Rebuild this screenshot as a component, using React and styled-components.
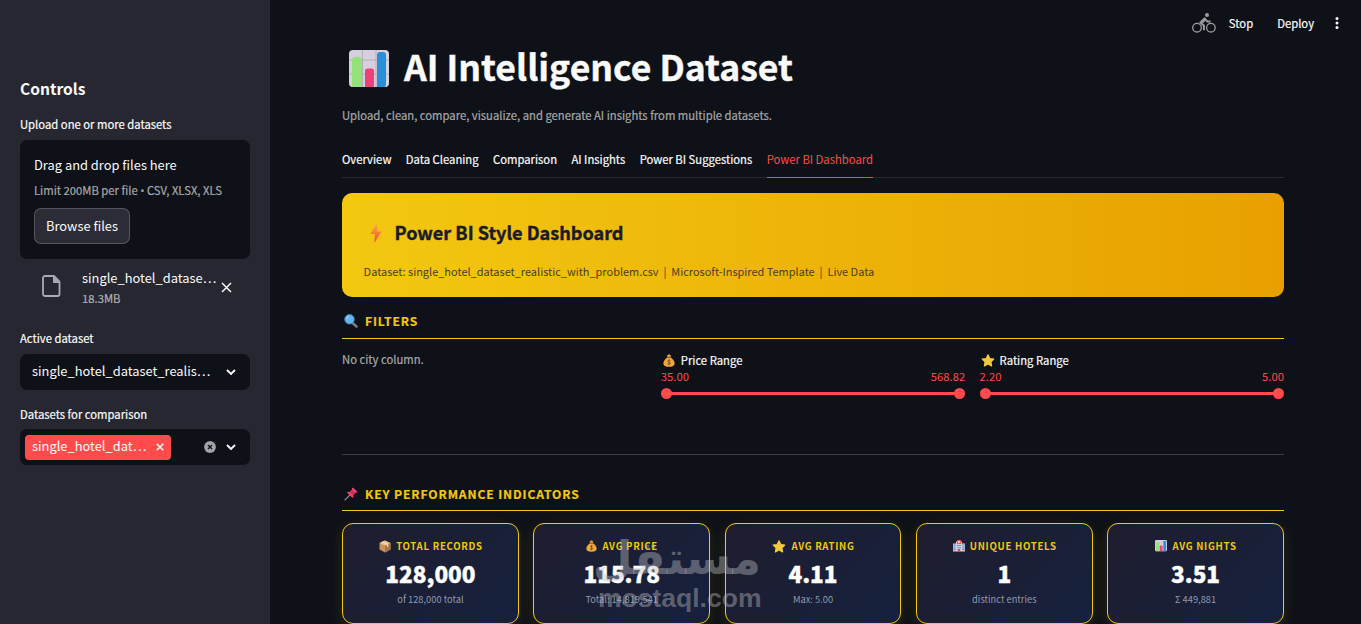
import React from 'react'
import styled, { createGlobalStyle, css } from 'styled-components'

// the CJK family carries wider latin glyphs, so sizes get scaled down
const fs = (px) => `${(px * 0.895).toFixed(2)}px`

const GlobalStyle = createGlobalStyle`
    * { box-sizing: border-box; }
    body {
        margin: 0;
        background: #0e1117;
        color: #fafafa;
        font-family: "Noto Sans CJK SC", "Open Sans", sans-serif;
        font-size: ${fs(12.6)};
        line-height: 20px;
        white-space: nowrap;
        overflow: hidden;
    }
`

const sturdy = css`
    -webkit-text-stroke: 0.2px currentColor;
`

const heavy = css`
    -webkit-text-stroke: 0.4px currentColor;
`

const Page = styled.div`
    display: flex;
    width: 1361px;
    height: 624px;
    overflow: hidden;
    position: relative;
`

const Sidebar = styled.aside`
    width: 270px;
    flex: none;
    padding: 76px 20px 0;
    background: #262730;
`

const SideTitle = styled.h2`
    margin: 0;
    font-size: ${fs(17.4)};
    font-weight: 600;
    line-height: 24px;
`

const Label = styled.div`
    height: 20px;
    margin-top: ${(p) => p.$top}px;
    line-height: 18px;
    ${sturdy}
`

const Dropzone = styled.div`
    height: 119px;
    margin-top: 5px;
    padding: 15px 14px;
    border-radius: 7px;
    background: #0e1117;
    font-size: ${fs(14.4)};
`

const Muted = styled.div`
    height: 18px;
    color: rgba(250, 250, 250, 0.6);
    font-size: ${fs(12.6)};
    line-height: 18px;
    ${sturdy}
`

const Limit = styled(Muted)`
    margin-top: 6px;
`

const Bullet = styled.span`
    font-family: "Open Sans", sans-serif;
`

const BrowseButton = styled.button`
    display: block;
    width: 96px;
    height: 36px;
    margin-top: 9px;
    padding: 0;
    border: 1px solid rgba(250, 250, 250, 0.2);
    border-radius: 7px;
    background: #2b2c36;
    color: #fafafa;
    font: inherit;
    font-size: ${fs(14.4)};
`

const FileRow = styled.div`
    display: flex;
    align-items: center;
    height: 40px;
    margin-top: 8px;
    padding-left: 22px;

    svg {
        flex: none;
    }

    svg:first-child {
        margin-bottom: 3px;
    }
`

const FileText = styled.div`
    width: 136px;
    margin: 0 3px 0 21px;
    padding-top: 1px;
    font-size: ${fs(14.4)};
    line-height: 19px;

    > ${Muted} {
        margin-top: 2px;
    }
`

const Select = styled.div`
    display: flex;
    align-items: center;
    height: 36px;
    margin-top: ${(p) => p.$top}px;
    padding: 0 13px 0 ${(p) => (p.$tags ? 5 : 12)}px;
    border-radius: 7px;
    background: #0e1117;
    font-size: ${fs(14.4)};

    > svg:first-of-type {
        margin-left: auto;
    }
`

const SelectText = styled.span`
    height: 20px;
    line-height: 18px;
`

const Tag = styled.span`
    display: flex;
    align-items: center;
    justify-content: space-between;
    width: 146px;
    height: 25px;
    padding: 0 7px;
    border-radius: 4px;
    background: #ff4b4b;
`

const Main = styled.main`
    width: 1014px;
    padding: 36px 0 0 72px;
`

const Toolbar = styled.div`
    position: absolute;
    top: 8px;
    right: 22px;
    display: flex;
    align-items: center;
    height: 29px;
    ${sturdy}
`

const ToolItem = styled.span`
    display: flex;
    align-items: center;
    height: 20px;
    line-height: 18px;
    margin-left: ${(p) => p.$left}px;
`

const Title = styled.h1`
    display: flex;
    align-items: center;
    height: 64px;
    margin: 0;
    padding: 0 0 4px 7px;
    gap: 15px;
    font-size: ${fs(39.7)};
    font-weight: 700;
    ${heavy}

    svg {
        margin-top: 5px;
    }
`

const Caption = styled(Muted)`
    margin-top: 6px;
`

const Tabs = styled.nav`
    display: flex;
    gap: 14.4px;
    height: 37px;
    margin-top: 17px;
    border-bottom: 1px solid #262930;
`

const Tab = styled.div`
    height: 37px;
    line-height: 36px;
    ${(p) => p.$active ? css`
        color: #ff4b4b;
        border-bottom: 1px solid #ff4b4b;
    ` : sturdy}
`

const Banner = styled.section`
    height: 104px;
    margin-top: 15px;
    padding: 24px 21.6px 0;
    border-radius: 10px;
    background: linear-gradient(90deg, #f2c811 0%, #e8a000 100%);
    color: #1a1a2e;
`

const BannerTitle = styled.h2`
    display: flex;
    align-items: center;
    gap: 12px;
    margin: 0;
    padding-left: 5px;
    font-size: ${fs(20.2)};
    font-weight: 700;
    line-height: 30px;
    ${heavy}

    svg {
        margin-top: 2px;
    }
`

const BannerText = styled.div`
    margin-top: 14px;
    font-size: ${fs(12.25)};
    color: #4a4020;
`

const SectionHead = styled.h3`
    display: flex;
    align-items: center;
    gap: 7px;
    height: ${(p) => p.$h}px;
    margin: 0;
    padding: ${(p) => p.$h - 28}px 0 ${(p) => p.$bottom}px 2px;
    border-bottom: 1px solid #f2c811;
    color: #f2c811;
    font-size: ${fs(13.5)};
    font-weight: 700;
    letter-spacing: 0.9px;
    ${sturdy}
`

const Filters = styled.div`
    display: grid;
    grid-template-columns: repeat(3, 1fr);
    column-gap: 14.4px;
    height: 115px;
    padding-top: 11px;
`

const SliderLabel = styled.div`
    display: flex;
    align-items: center;
    gap: 4.5px;
    padding-left: 1.5px;
    ${sturdy}

    svg {
        width: 14px;
    }
`

const SliderValues = styled.div`
    display: flex;
    justify-content: space-between;
    margin-top: -3px;
    color: #ff4b4b;
    line-height: 18px;
`

const Track = styled.div`
    display: flex;
    align-items: center;
    justify-content: space-between;
    height: 11px;
    margin-top: 3px;
    background: linear-gradient(#ff4b4b, #ff4b4b) center / calc(100% - 8px) 3px no-repeat;

    &::before,
    &::after {
        content: '';
        width: 11px;
        height: 11px;
        border-radius: 50%;
        background: #ff4b4b;
    }
`

const Divider = styled.hr`
    height: 1px;
    margin: 0;
    border: 0;
    background: #3a3d42;
`

const Cards = styled.div`
    display: grid;
    grid-template-columns: repeat(5, 1fr);
    column-gap: 14.4px;
    margin-top: 12px;
`

const Card = styled.div`
    display: flex;
    flex-direction: column;
    align-items: center;
    height: 101px;
    padding-top: 13px;
    border: 1px solid #f2c811;
    border-radius: 11px;
    background: linear-gradient(135deg, #1f1d2e 0%, #16213e 100%);
    box-shadow: 0 4px 14px rgba(242, 200, 17, 0.13);
`

const CardLabel = styled.div`
    display: flex;
    align-items: center;
    gap: 5px;
    padding-left: 1px;
    color: #f2c811;
    font-size: ${fs(10.7)};
    font-weight: 600;
    letter-spacing: 0.72px;
    line-height: 18px;
`

const CardValue = styled.div`
    font-size: ${fs(25.2)};
    font-weight: 900;
    color: #fff;
    line-height: 32px;
    margin-top: 2px;
    ${heavy}
`

const CardSub = styled.div`
    margin-top: 2px;
    color: #8d9ab0;
    font-size: ${fs(10.4)};
    line-height: 16px;
`

const Watermark = styled.div`
    position: absolute;
    left: 598px;
    top: 530px;
    width: 163px;
    color: rgba(190, 190, 195, 0.42);
    text-align: center;
    font-weight: 700;
`

const WatermarkArabic = styled.div`
    font-family: "DejaVu Sans", sans-serif;
    direction: rtl;
    font-size: 46px;
    line-height: 56px;
    height: 54px;
`

const WatermarkLatin = styled.div`
    font-family: "Liberation Sans", sans-serif;
    font-size: 26.5px;
    line-height: 28px;
`

const ChartIcon = ({ size }) => (
    <svg width={size} height={size * 0.93} viewBox="0 0 40 37">
        <rect width="40" height="37" rx="4" fill="#d6d0de" />
        <path d="M13.5 0v37M27 0v37M0 10h40M0 24h40" stroke="#b4adbd" strokeWidth="1" />
        <path d="M3 10a3 3 0 0 1 3-3h4a3 3 0 0 1 3 3v27H5a2 2 0 0 1-2-2z" fill="#94e17a" />
        <path d="M16 21a2.5 2.5 0 0 1 2.5-2.5h4A2.5 2.5 0 0 1 25 21v16h-9z" fill="#ec407a" />
        <path d="M28 5a3 3 0 0 1 3-3h3a3 3 0 0 1 3 3v30a2 2 0 0 1-2 2h-7z" fill="#2b8fd6" />
    </svg>
)

const BoltIcon = () => (
    <svg width="14" height="20" viewBox="0 0 14 20">
        <defs>
            <linearGradient id="bolt" x1="0" y1="0" x2="0" y2="1">
                <stop offset="0" stopColor="#f9b13c" />
                <stop offset="1" stopColor="#f8433f" />
            </linearGradient>
        </defs>
        <path d="M8 0 1.5 11H6l-.8 9L12.5 8.5H8.2z" fill="url(#bolt)" />
    </svg>
)

const SearchIcon = () => (
    <svg width="14" height="14" viewBox="0 0 14 14">
        <path d="m8.5 9 4 3.4" stroke="#7f7a88" strokeWidth="2.6" strokeLinecap="round" />
        <circle cx="5.5" cy="5.3" r="4.8" fill="#66b5f0" stroke="#3f82bd" strokeWidth=".8" />
        <path d="M2.8 4.8a2.8 2.8 0 0 1 2.4-2.4" stroke="#b5dffb" fill="none" />
    </svg>
)

const MoneyIcon = ({ size = 12 }) => (
    <svg width={size} height={size + 1} viewBox="0 0 12 13">
        <path d="M4 1.2 5 1l1-1 1 1 1 .2L7.4 3.5h-3z" fill="#e99a35" />
        <path d="M4.3 3.4h3.4C10 5 11.6 7 11.6 9.2c0 2.6-2 3.6-5.6 3.6S.4 11.8.4 9.2C.4 7 2 5 4.3 3.4z" fill="#efa63a" />
        <path d="M4 3.4h4" stroke="#9a5a24" />
        <path d="M7.4 6.6C6 5.8 4.7 6.4 4.9 7.4c.2 1 2.4.7 2.4 1.9 0 1-1.6 1.2-2.8.5M6 5.5v5.4" stroke="#7b4a1f" strokeWidth=".9" fill="none" />
    </svg>
)

const StarIcon = () => (
    <svg width="14" height="13" viewBox="0 0 14 13">
        <path d="m7 .8 1.8 3.7 4 .5-2.9 2.8.7 4.1L7 10l-3.6 1.9.7-4.1L1.2 5l4-.5z" fill="#f3c93c" stroke="#f3c93c" strokeWidth="1.2" strokeLinejoin="round" />
    </svg>
)

const PinIcon = () => (
    <svg width="14" height="14" viewBox="0 0 15 14">
        <path d="m6 8.5-5 4.7" stroke="#9b97a3" strokeWidth="1.2" strokeLinecap="round" />
        <path d="M8.7.6c.6-.6 1-.5 1.5 0l3.7 3.5c.6.6.5 1.2-.2 1.4l-1.3.2L9.9 8c.3 1.4.2 2.5-.7 3.2L3 5.5c.8-.9 2-1 3.3-.7L8.5 2.3z" fill="#ee3f6c" />
        <path d="m8.8 3 2.9 2.7-2.4 2.2-2.5-2.5z" fill="#c7305a" />
    </svg>
)

const BoxIcon = () => (
    <svg width="12" height="13" viewBox="0 0 12 13">
        <path d="m6 .5 5.5 2.5v6.5L6 12.5.5 9.5V3z" fill="#c9935f" />
        <path d="M6 .5 11.5 3 6 5.8.5 3z" fill="#e6bb88" />
        <path d="M6 5.8 11.5 3v6.5L6 12.5z" fill="#a87449" />
        <path d="m3 1.8 5.6 2.7v2.4" stroke="#f4e0c4" strokeWidth="1.2" fill="none" />
    </svg>
)

const HotelIcon = () => (
    <svg width="12" height="12" viewBox="0 0 12 12">
        <path d="M3 1.5h6v10H3z" fill="#ddd3df" />
        <path d="M0 3.5h3.2v8H0zM8.8 3.5H12v8H8.8z" fill="#c9c2d2" />
        <path d="M4 0h4v4H4z" fill="#ef4a50" />
        <path d="M6 .8v2.4M4.8 2h2.4" stroke="#fff" strokeWidth=".8" />
        <path d="M.6 5h2M.6 7.2h2M.6 9.4h2M9.4 5h2M9.4 7.2h2M9.4 9.4h2M4 5.5h4M4 7.7h4" stroke="#4b93d6" strokeWidth="1.1" />
        <path d="M4.8 9h2.4v2.5H4.8z" fill="#d5484d" />
        <path d="M0 3.5h3M9 3.5h3M0 11.5h12" stroke="#b95b5f" strokeWidth=".8" />
    </svg>
)

const BikeIcon = () => (
    <svg width="24" height="20" viewBox="0 0 24 20" fill="none" stroke="#9a9ca0">
        <circle cx="5" cy="14.7" r="4.3" strokeWidth="1.3" />
        <circle cx="18.9" cy="14.7" r="4.3" strokeWidth="1.3" />
        <circle cx="15" cy="2" r="2" fill="#9a9ca0" stroke="none" />
        <path d="M11.9 17.2v-4.6L8.4 9.4l4.2-4 2.8 3.2h3.1" strokeWidth="2" strokeLinejoin="round" />
        <path d="m9.5 8.5 3-2.8 1 1.3-2.5 2.8z" fill="#9a9ca0" />
    </svg>
)

const FileIcon = () => (
    <svg width="19" height="22" viewBox="0 0 19 22">
        <path d="M3 1h9l5.5 5.6V19a2 2 0 0 1-2 2H3a2 2 0 0 1-2-2V3a2 2 0 0 1 2-2z" fill="none" stroke="#a9a8b4" strokeWidth="1.8" />
        <path d="M11 1v7h7z" fill="#a9a8b4" />
    </svg>
)

const CloseIcon = ({ size = 11, width = 1.5 }) => (
    <svg width={size} height={size} viewBox="0 0 11 11">
        <path d="m1 1 9 9m0-9-9 9" stroke="#fafafa" strokeWidth={width} fill="none" />
    </svg>
)

const Clear = styled.svg`
    margin-right: 9px;
`

const ClearIcon = () => (
    <Clear width="12" height="12" viewBox="0 0 12 12">
        <circle cx="6" cy="6" r="5.9" fill="#a3a4a8" />
        <path d="m4 4 4 4m0-4L4 8" stroke="#0e1117" strokeWidth="1.3" />
    </Clear>
)

const ChevronIcon = () => (
    <svg width="12" height="8" viewBox="0 0 12 8">
        <path d="m2 2 4 4 4-4" stroke="#fafafa" strokeWidth="1.9" fill="none" />
    </svg>
)

const DotsIcon = () => (
    <svg width="4" height="14" viewBox="0 0 4 14" fill="#fafafa">
        <circle cx="2" cy="2.5" r="1.5" />
        <circle cx="2" cy="7" r="1.5" />
        <circle cx="2" cy="11.5" r="1.5" />
    </svg>
)

const tabs = ['Overview', 'Data Cleaning', 'Comparison', 'AI Insights', 'Power BI Suggestions', 'Power BI Dashboard']

const kpis = [
    { icon: <BoxIcon />, label: 'TOTAL RECORDS', value: '128,000', sub: 'of 128,000 total' },
    { icon: <MoneyIcon size={11} />, label: 'AVG PRICE', value: '115.78', sub: 'Total: 14,819,541' },
    { icon: <StarIcon />, label: 'AVG RATING', value: '4.11', sub: 'Max: 5.00' },
    { icon: <HotelIcon />, label: 'UNIQUE HOTELS', value: '1', sub: 'distinct entries' },
    { icon: <ChartIcon size={12} />, label: 'AVG NIGHTS', value: '3.51', sub: 'Σ 449,881' },
]

const Slider = ({ icon, label, min, max }) => (
    <div>
        <SliderLabel>{icon}{label}</SliderLabel>
        <SliderValues>
            <span>{min}</span>
            <span>{max}</span>
        </SliderValues>
        <Track />
    </div>
)

const App = () => (
    <Page>
        <GlobalStyle />
        <Sidebar>
            <SideTitle>Controls</SideTitle>
            <Label $top={15}>Upload one or more datasets</Label>
            <Dropzone>
                <div>Drag and drop files here</div>
                <Limit>Limit 200MB per file <Bullet>•</Bullet> CSV, XLSX, XLS</Limit>
                <BrowseButton>Browse files</BrowseButton>
            </Dropzone>
            <FileRow>
                <FileIcon />
                <FileText>
                    <div>single_hotel_datase…</div>
                    <Muted>18.3MB</Muted>
                </FileText>
                <CloseIcon />
            </FileRow>
            <Label $top={22}>Active dataset</Label>
            <Select $top={5}>
                <SelectText>single_hotel_dataset_realis…</SelectText>
                <ChevronIcon />
            </Select>
            <Label $top={15}>Datasets for comparison</Label>
            <Select $top={4} $tags>
                <Tag>
                    <SelectText>single_hotel_dat…</SelectText>
                    <CloseIcon size={8} width={2.2} />
                </Tag>
                <ClearIcon />
                <ChevronIcon />
            </Select>
        </Sidebar>

        <Main>
            <Title>
                <ChartIcon size={40} />
                AI Intelligence Dataset
            </Title>
            <Caption>Upload, clean, compare, visualize, and generate AI insights from multiple datasets.</Caption>
            <Tabs>
                {tabs.map((tab, i) => (
                    <Tab key={tab} $active={i === tabs.length - 1}>{tab}</Tab>
                ))}
            </Tabs>
            <Banner>
                <BannerTitle>
                    <BoltIcon />
                    Power BI Style Dashboard
                </BannerTitle>
                <BannerText>
                    Dataset: single_hotel_dataset_realistic_with_problem.csv &nbsp;|&nbsp; Microsoft-Inspired Template &nbsp;|&nbsp; Live Data
                </BannerText>
            </Banner>
            <SectionHead $h={42} $bottom={7}>
                <SearchIcon />
                FILTERS
            </SectionHead>
            <Filters>
                <Muted>No city column.</Muted>
                <Slider icon={<MoneyIcon />} label="Price Range" min="35.00" max="568.82" />
                <Slider icon={<StarIcon />} label="Rating Range" min="2.20" max="5.00" />
            </Filters>
            <Divider />
            <SectionHead $h={56} $bottom={5}>
                <PinIcon />
                KEY PERFORMANCE INDICATORS
            </SectionHead>
            <Cards>
                {kpis.map((kpi) => (
                    <Card key={kpi.label}>
                        <CardLabel>{kpi.icon}{kpi.label}</CardLabel>
                        <CardValue>{kpi.value}</CardValue>
                        <CardSub>{kpi.sub}</CardSub>
                    </Card>
                ))}
            </Cards>
        </Main>

        <Toolbar>
            <BikeIcon />
            <ToolItem $left={13}>Stop</ToolItem>
            <ToolItem $left={24}>Deploy</ToolItem>
            <ToolItem $left={21}><DotsIcon /></ToolItem>
        </Toolbar>

        <Watermark>
            <WatermarkArabic>مستقل</WatermarkArabic>
            <WatermarkLatin>mostaql.com</WatermarkLatin>
        </Watermark>
    </Page>
)

export default App
